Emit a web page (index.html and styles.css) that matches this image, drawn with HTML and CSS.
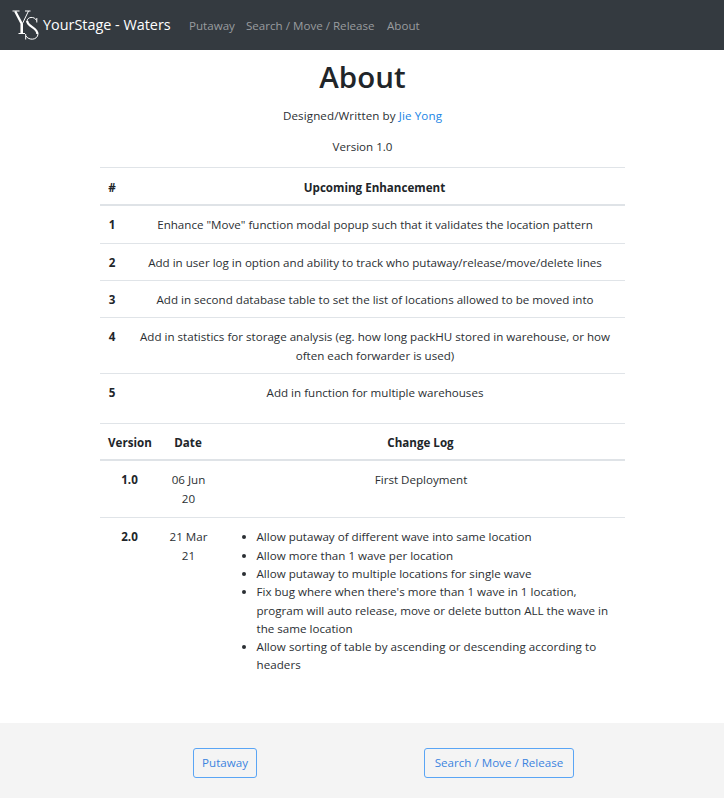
FILE: index.html
```html
<!DOCTYPE html>
<html lang="en">
<head>
<meta charset="utf-8">
<title>YourStage - Waters</title>
<link rel="stylesheet" href="styles.css">
</head>
<body>
<nav class="navbar">
  <svg class="logo" viewBox="0 0 28 32" aria-hidden="true">
    <path class="thin" d="M0.5 2H7.5M13 2H18.5M16.5 2 10.5 14.5V24.5M6.5 24.5H13"/>
    <path class="thick" d="M3.2 2.3 9.6 14.5V24"/>
    <path class="thin" d="M24.8 13.5V9M24.5 11.5C22.5 7 15 7.5 15 12.5M26 25C25.5 31.5 16.5 31.5 14 27M13.7 30.5V25"/>
    <path class="thick" d="M15.2 12C15.4 18 25.8 18.5 25.4 25"/>
  </svg>
  <a class="brand">YourStage - Waters</a>
  <a class="nav-link putaway">Putaway</a>
  <a class="nav-link search">Search / Move / Release</a>
  <a class="nav-link about">About</a>
</nav>
<main class="container">
  <h1>About</h1>
  <p class="author">Designed/Written by <a class="link">Jie Yong</a></p>
  <p>Version 1.0</p>
  <table class="table enhancements">
    <colgroup><col class="col-num"><col></colgroup>
    <thead><tr><th>#</th><th>Upcoming Enhancement</th></tr></thead>
    <tbody>
      <tr><th>1</th><td>Enhance "Move" function modal popup such that it validates the location pattern</td></tr>
      <tr><th>2</th><td>Add in user log in option and ability to track who putaway/release/move/delete lines</td></tr>
      <tr><th>3</th><td>Add in second database table to set the list of locations allowed to be moved into</td></tr>
      <tr class="double"><th>4</th><td>Add in statistics for storage analysis (eg. how long packHU stored in warehouse, or how<br>often each forwarder is used)</td></tr>
      <tr class="last"><th>5</th><td>Add in function for multiple warehouses</td></tr>
    </tbody>
  </table>
  <table class="table changelog">
    <colgroup><col class="col-version"><col class="col-date"><col></colgroup>
    <thead><tr><th>Version</th><th>Date</th><th>Change Log</th></tr></thead>
    <tbody>
      <tr class="double"><th>1.0</th><td>06 Jun<br>20</td><td>First Deployment</td></tr>
      <tr><th>2.0</th><td>21 Mar<br>21</td><td>
        <ul>
          <li>Allow putaway of different wave into same location</li>
          <li>Allow more than 1 wave per location</li>
          <li>Allow putaway to multiple locations for single wave</li>
          <li>Fix bug where when there's more than 1 wave in 1 location,<br>program will auto release, move or delete button ALL the wave in<br>the same location</li>
          <li class="spaced">Allow sorting of table by ascending or descending according to<br>headers</li>
        </ul>
      </td></tr>
    </tbody>
  </table>
</main>
<footer class="footer">
  <div><button class="btn">Putaway</button></div>
  <div><button class="btn wide">Search / Move / Release</button></div>
</footer>
</body>
</html>
```
FILE: styles.css
```css
* { box-sizing: border-box; }
body {
  margin: 0;
  height: 798px;
  display: flex;
  flex-direction: column;
  background: #fff;
  color: #2b2f33;
  font: 11.6px/18.3px "Open Sans", "Noto Sans", sans-serif;
}
.navbar {
  height: 50px;
  flex: none;
  display: flex;
  align-items: center;
  padding-left: 12px;
  background: #343a40;
  white-space: nowrap;
}
.logo { width: 28px; height: 32px; flex: none; fill: none; stroke: #fff; }
.thin { stroke-width: 1; }
.thick { stroke-width: 2.3; }
.brand { width: 149px; padding-left: 3px; color: #fff; font-size: 14.4px; flex: none; }
.nav-link { color: #999c9f; padding-top: 2px; }
.putaway { width: 57px; }
.search { width: 141px; }
.container { width: 525px; margin-left: 100px; flex: 1; text-align: center; }
h1 { margin: 8px 0 11px; font-size: 29.5px; line-height: 37px; font-weight: 600; color: #212529; }
p { margin: 0 0 12px; line-height: 18.4px; position: relative; top: 2px; }
.author { top: 1px; letter-spacing: .1px; }
.link { color: #2185e5; }
.table { width: 100%; table-layout: fixed; border-collapse: separate; border-spacing: 0; }
.table th, .table td { height: 37px; padding: 10px 9px 0; border-top: 1px solid #e0e4e8; vertical-align: top; white-space: nowrap; }
.table thead th { height: 38px; border-bottom: 2px solid #dfe3e7; }
.table tbody tr:first-child > * { border-top: 0; }
.table .double > * { height: 56px; }
.table .last > * { height: 50px; }
.table th { font-weight: 700; color: #212529; padding-left: 8px; }
.enhancements td { padding-left: 8px; padding-right: 8px; }
.enhancements thead th { height: 39px; padding-top: 11px; }
.enhancements tbody tr:first-child > * { height: 37.5px; }
.col-num { width: 25px; }
.col-version { width: 60px; }
.col-date { width: 57px; }
ul { margin: 0; padding-left: 30.5px; text-align: left; }
.spaced { letter-spacing: .05px; }
.footer { height: 75px; flex: none; display: flex; background: #f4f4f4; }
.footer div { display: flex; align-items: center; padding-top: 5px; }
.footer div:first-child { width: 424px; padding-left: 193px; }
.btn { width: 64px; height: 30px; padding: 1px 0 0; border: 1px solid #5aa5f5; border-radius: 3px; background: transparent; color: #3c84df; font: inherit; white-space: nowrap; }
.wide { width: 150px; }
```
